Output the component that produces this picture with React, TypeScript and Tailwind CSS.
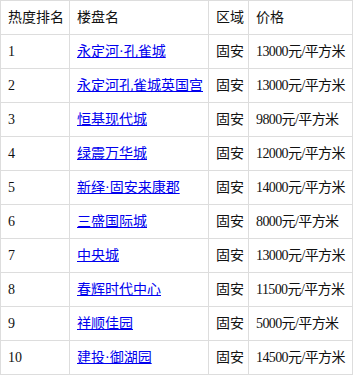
import React from "react";

const rows: [string, string, string, string][] = [
  ["1", "永定河·孔雀城", "固安", "13000元/平方米"],
  ["2", "永定河孔雀城英国宫", "固安", "13000元/平方米"],
  ["3", "恒基现代城", "固安", "9800元/平方米"],
  ["4", "绿震万华城", "固安", "12000元/平方米"],
  ["5", "新绎·固安来康郡", "固安", "14000元/平方米"],
  ["6", "三盛国际城", "固安", "8000元/平方米"],
  ["7", "中央城", "固安", "13000元/平方米"],
  ["8", "春辉时代中心", "固安", "11500元/平方米"],
  ["9", "祥顺佳园", "固安", "5000元/平方米"],
  ["10", "建投·御湖园", "固安", "14500元/平方米"],
];

export default function App() {
  const cell = "border border-[#dddddd] pl-[7px] pr-0 h-[34px] align-middle whitespace-nowrap";
  return (
    <div
      className="bg-white text-[14px] text-[#111111]"
      style={{ fontFamily: '"Liberation Serif", "Noto Sans CJK SC", serif' }}
    >
      <table className="border-collapse table-fixed w-[352px]">
        <colgroup>
          <col className="w-[69px]" />
          <col className="w-[139px]" />
          <col className="w-[40px]" />
          <col className="w-[104px]" />
        </colgroup>
        <thead>
          <tr>
            <th className={cell + " text-left font-normal"}>热度排名</th>
            <th className={cell + " text-left font-normal"}>楼盘名</th>
            <th className={cell + " text-left font-normal"}>区域</th>
            <th className={cell + " text-left font-normal"}>价格</th>
          </tr>
        </thead>
        <tbody>
          {rows.map((r) => (
            <tr key={r[0]}>
              <td className={cell}>{r[0]}</td>
              <td className={cell}>
                <a href="#" className="text-[#0000ee] underline">
                  {r[1]}
                </a>
              </td>
              <td className={cell}>{r[2]}</td>
              <td className={cell + " tracking-[-0.6px]"}>{r[3]}</td>
            </tr>
          ))}
        </tbody>
      </table>
    </div>
  );
}
